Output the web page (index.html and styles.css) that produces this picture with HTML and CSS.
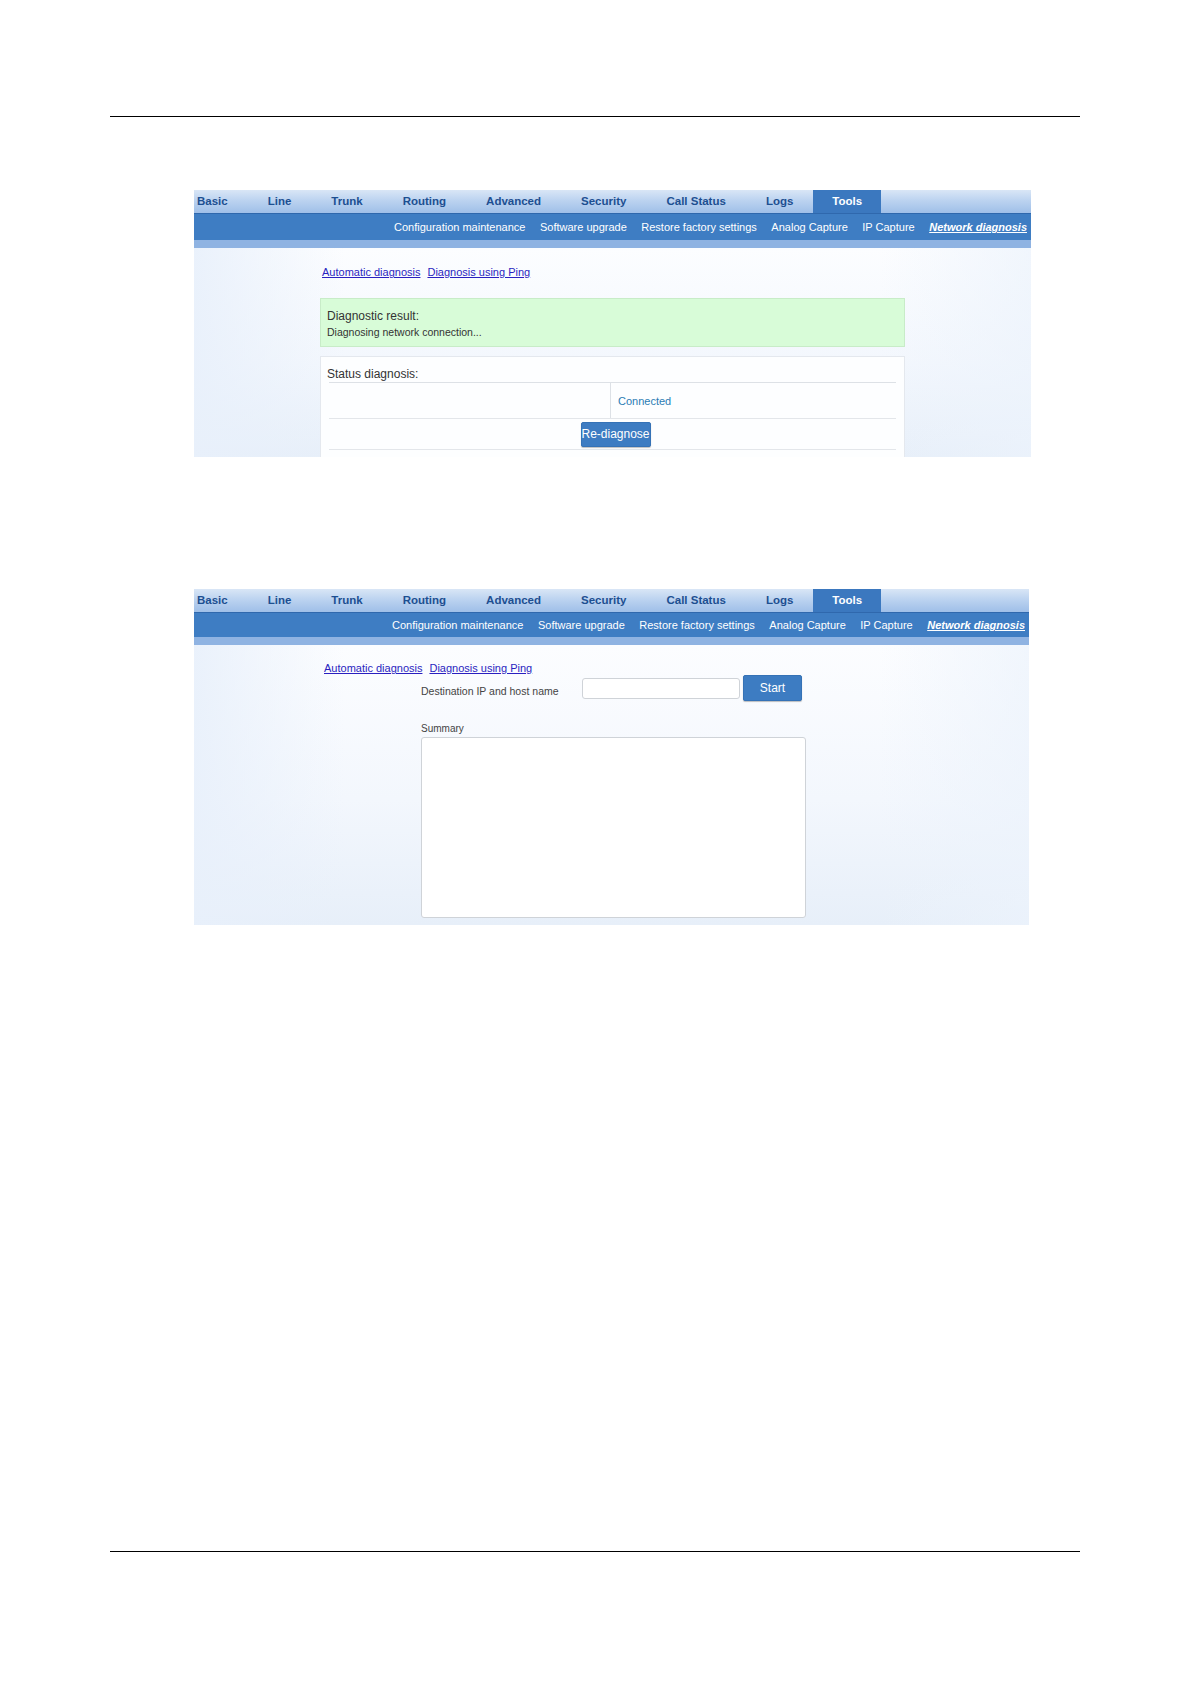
FILE: index.html
```html
<!DOCTYPE html>
<html>
<head>
<meta charset="utf-8">
<link rel="stylesheet" href="styles.css">
</head>
<body>
<div class="page">
  <div class="rule rule-top"></div>

  <div class="ui ui-1">
    <div class="topnav">
      <span class="tab tab-first">Basic</span>
      <span class="tab">Line</span>
      <span class="tab">Trunk</span>
      <span class="tab">Routing</span>
      <span class="tab">Advanced</span>
      <span class="tab">Security</span>
      <span class="tab">Call Status</span>
      <span class="tab">Logs</span>
      <span class="tab tab-active">Tools</span>
    </div>
    <div class="subnav">
      <span class="sub">Configuration maintenance</span>
      <span class="sub">Software upgrade</span>
      <span class="sub">Restore factory settings</span>
      <span class="sub">Analog Capture</span>
      <span class="sub">IP Capture</span>
      <span class="sub sub-active">Network diagnosis</span>
    </div>
    <div class="strip"></div>
    <div class="content content-1">
      <div class="links">
        <a class="link" href="#">Automatic diagnosis</a>
        <a class="link" href="#">Diagnosis using Ping</a>
      </div>
      <div class="result">
        <div class="result-title">Diagnostic result:</div>
        <div class="result-text">Diagnosing network connection...</div>
      </div>
      <div class="status">
        <div class="status-title">Status diagnosis:</div>
        <div class="status-table">
          <div class="row row-1">
            <div class="cell cell-left"></div>
            <div class="cell cell-right"><span class="connected">Connected</span></div>
          </div>
          <div class="row row-2">
            <button class="btn btn-rediag">Re-diagnose</button>
          </div>
        </div>
      </div>
    </div>
  </div>

  <div class="ui ui-2">
    <div class="topnav">
      <span class="tab tab-first">Basic</span>
      <span class="tab">Line</span>
      <span class="tab">Trunk</span>
      <span class="tab">Routing</span>
      <span class="tab">Advanced</span>
      <span class="tab">Security</span>
      <span class="tab">Call Status</span>
      <span class="tab">Logs</span>
      <span class="tab tab-active">Tools</span>
    </div>
    <div class="subnav subnav-2">
      <span class="sub">Configuration maintenance</span>
      <span class="sub">Software upgrade</span>
      <span class="sub">Restore factory settings</span>
      <span class="sub">Analog Capture</span>
      <span class="sub">IP Capture</span>
      <span class="sub sub-active">Network diagnosis</span>
    </div>
    <div class="strip"></div>
    <div class="content content-2">
      <div class="links">
        <a class="link" href="#">Automatic diagnosis</a>
        <a class="link" href="#">Diagnosis using Ping</a>
      </div>
      <div class="ping">
        <div class="ping-row">
          <span class="ping-label">Destination IP and host name</span>
          <input class="ping-input" type="text">
          <button class="btn btn-start">Start</button>
        </div>
        <div class="summary-label">Summary</div>
        <textarea class="summary"></textarea>
      </div>
    </div>
  </div>

  <div class="rule rule-bottom"></div>
</div>
</body>
</html>
```

FILE: styles.css
```css
html, body {
  margin: 0;
  padding: 0;
  background: #ffffff;
}

body {
  font-family: "Liberation Sans", Arial, sans-serif;
  color: #333;
}

.page {
  width: 1191px;
  height: 1684px;
  padding-top: 116px;
  box-sizing: border-box;
  display: flex;
  flex-direction: column;
}

.rule {
  margin-left: 110px;
  width: 970px;
  height: 1.4px;
  background: #000;
}

.rule-bottom {
  margin-top: auto;
  margin-bottom: 132px;
}

/* ---------- screenshot frame ---------- */
.ui {
  margin-left: 194px;
  width: 837px;
  overflow: hidden;
  display: flex;
  flex-direction: column;
}

.ui-1 {
  margin-top: 73px;
}

.ui-2 {
  margin-top: 132px;
  width: 835px;
}

.topnav {
  height: 23px;
  border-bottom: 1px solid #2f68ad;
  background: linear-gradient(to bottom, #d9e6f6 0%, #bcd3f0 45%, #9fbfe8 100%);
  display: flex;
  align-items: stretch;
  white-space: nowrap;
}

.tab {
  padding: 0 20px;
  font-size: 11.5px;
  font-weight: bold;
  line-height: 23px;
  color: #1d4f91;
}

.tab-first {
  padding-left: 3px;
}

.tab-active {
  background: #3b78bf;
  color: #ffffff;
  padding: 0 19px;
}

.subnav {
  height: 26px;
  background: #3e7dc3;
  display: flex;
  justify-content: flex-end;
  gap: 14.5px;
  padding-right: 4px;
  white-space: nowrap;
}

.subnav-2 {
  height: 24px;
}

.sub {
  font-size: 11px;
  line-height: 26px;
  color: #ffffff;
}

.subnav-2 .sub {
  line-height: 24px;
}

.sub-active {
  font-weight: bold;
  font-style: italic;
  text-decoration: underline;
}

.strip {
  height: 8px;
  background: #8fb3e2;
}

.content {
  background:
    linear-gradient(to right, rgba(232, 240, 251, 0.9) 0%, rgba(255, 255, 255, 0) 18%, rgba(255, 255, 255, 0) 82%, rgba(236, 243, 252, 0.7) 100%),
    linear-gradient(to bottom, #fcfdff 0%, #f3f7fd 55%, #e7eff9 100%);
  display: flex;
  flex-direction: column;
}

.content-1 {
  height: 209px;
  padding-left: 126px;
  padding-top: 16px;
  box-sizing: border-box;
}

.content-2 {
  height: 280px;
  padding-left: 130px;
  padding-top: 15px;
  box-sizing: border-box;
}

.links {
  display: flex;
  gap: 7px;
  padding-left: 2px;
  height: 16px;
  line-height: 16px;
}

.content-2 .links {
  padding-left: 0;
}

.link {
  font-size: 11px;
  color: #2a1fc0;
  text-decoration: underline;
}

/* ---------- automatic diagnosis ---------- */
.result {
  margin-top: 18px;
  width: 585px;
  box-sizing: border-box;
  background: #d8fcd8;
  border: 1px solid #c8ecc8;
  padding: 9px 6px 6px;
}

.result-title {
  font-size: 12px;
  line-height: 16px;
  color: #333;
}

.result-text {
  font-size: 10.5px;
  line-height: 16px;
  color: #333;
}

.status {
  margin-top: 9px;
  width: 585px;
  flex: 1;
  box-sizing: border-box;
  border: 1px solid #e4e8ee;
  border-bottom: none;
  background: #fdfeff;
  padding: 9px 8px 0 8px;
}

.status-title {
  font-size: 12px;
  line-height: 16px;
  color: #333;
  margin-left: -2px;
}

.status-table {
  border-top: 1px solid #dde1e6;
}

.row {
  display: flex;
  border-bottom: 1px solid #e3e6ea;
}

.row-1 {
  height: 35px;
}

.cell-left {
  width: 281px;
  border-right: 1px solid #dde1e6;
}

.cell-right {
  display: flex;
  align-items: center;
  padding-left: 7px;
}

.connected {
  font-size: 11px;
  color: #2b7cb4;
}

.row-2 {
  height: 30px;
  justify-content: center;
  align-items: center;
  padding-left: 6px;
}

.btn {
  font-family: "Liberation Sans", Arial, sans-serif;
  background: #3d7cc2;
  color: #ffffff;
  border: 1px solid #3572b6;
  border-radius: 2px;
  box-shadow: 0 1px 1px rgba(0, 0, 0, 0.25);
  padding: 0;
  margin: 0;
  white-space: nowrap;
  cursor: pointer;
}

.btn-rediag {
  width: 70px;
  height: 25px;
  font-size: 12px;
}

/* ---------- ping ---------- */
.ping {
  padding-left: 97px;
  display: flex;
  flex-direction: column;
}

.ping-row {
  margin-top: -1px;
  display: flex;
  align-items: center;
  height: 26px;
}

.ping-label {
  font-size: 10.5px;
  color: #444;
  width: 161px;
  padding-top: 6px;
}

.ping-input {
  width: 158px;
  height: 21px;
  box-sizing: border-box;
  border: 1px solid #cfd3d8;
  border-radius: 3px;
  background: #fff;
  margin: 0;
  padding: 0 4px;
}

.btn-start {
  margin-left: 3px;
  width: 59px;
  height: 26px;
  font-size: 12px;
}

.summary-label {
  margin-top: 22px;
  font-size: 10px;
  color: #444;
  line-height: 12px;
}

.summary {
  margin: 2px 0 0 0;
  width: 385px;
  height: 181px;
  box-sizing: border-box;
  border: 1px solid #cfd3d8;
  border-radius: 3px;
  background: #ffffff;
  resize: none;
  padding: 0;
  display: block;
}
```
